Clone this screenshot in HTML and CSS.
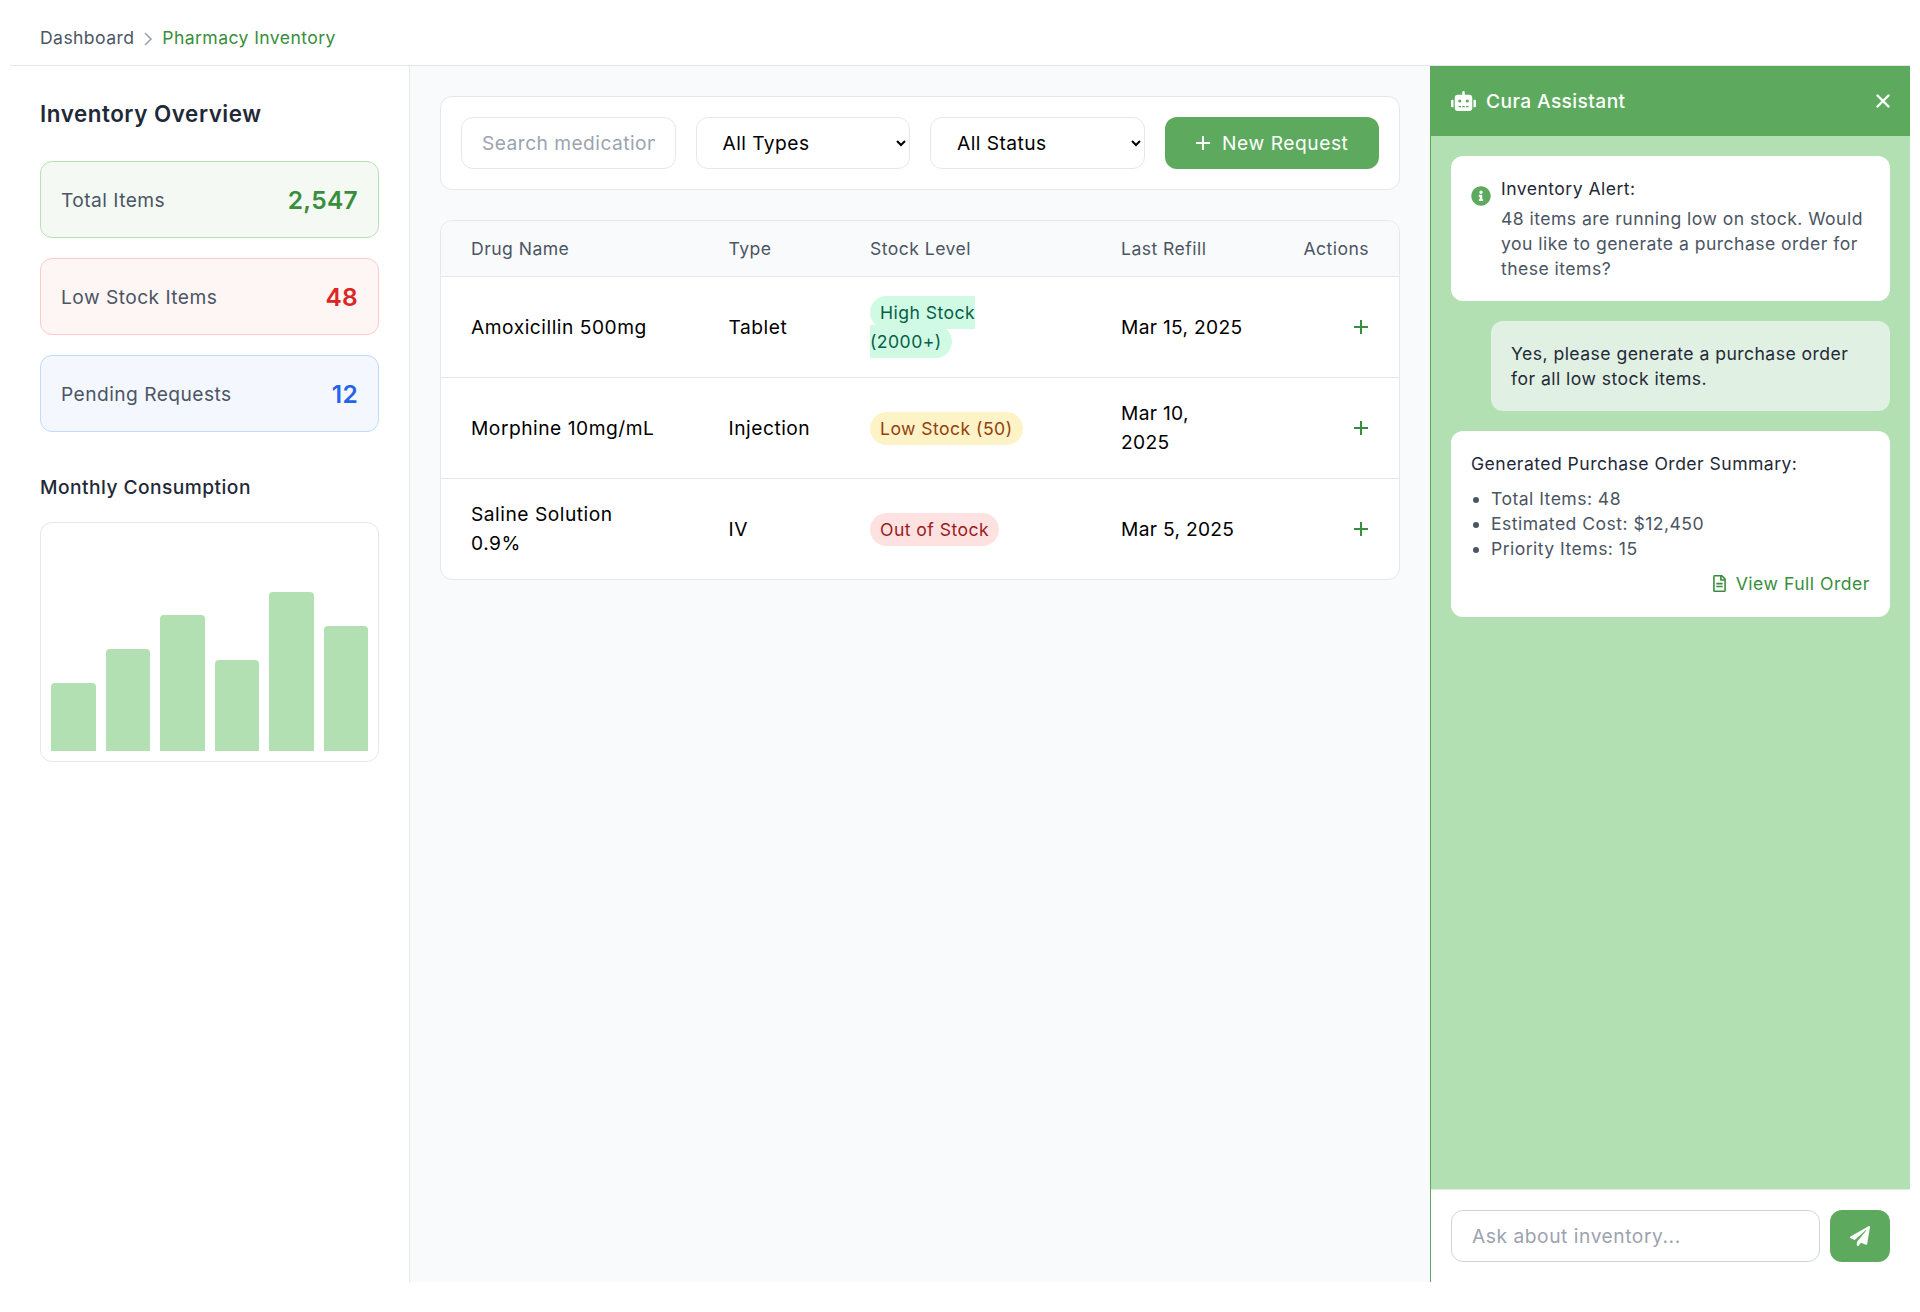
FILE: index.html
```html
<!DOCTYPE html>
<html lang="en">
<head>
  <meta charset="UTF-8" />
  <title>Pharmacy Inventory</title>
  <link rel="stylesheet" href="styles.css">
</head>
<body>
  <nav class="breadcrumb">
    <a href="#">Dashboard</a>
    <svg class="crumb-sep" viewBox="0 0 10 16"><path d="M2 2l6 6-6 6" /></svg>
    <span class="crumb-current">Pharmacy Inventory</span>
  </nav>

  <div class="layout">
    <aside class="sidebar">
      <h2>Inventory Overview</h2>
      <div class="stat-list">
        <div class="stat stat-green"><span>Total Items</span><strong>2,547</strong></div>
        <div class="stat stat-red"><span>Low Stock Items</span><strong>48</strong></div>
        <div class="stat stat-blue"><span>Pending Requests</span><strong>12</strong></div>
      </div>
      <h3>Monthly Consumption</h3>
      <div class="chart">
        <div class="bar" style="height: 30%"></div>
        <div class="bar" style="height: 45%"></div>
        <div class="bar" style="height: 60%"></div>
        <div class="bar" style="height: 40%"></div>
        <div class="bar" style="height: 70%"></div>
        <div class="bar" style="height: 55%"></div>
      </div>
    </aside>

    <main class="content">
      <div class="toolbar">
        <input type="text" placeholder="Search medications..." />
        <select><option>All Types</option></select>
        <select><option>All Status</option></select>
        <button class="btn-new">
          <svg class="icon-plus" viewBox="0 0 16 16"><path d="M8 1v14M1 8h14" /></svg>
          New Request
        </button>
      </div>

      <div class="table-wrap">
        <table>
          <thead>
            <tr>
              <th class="col-name">Drug Name</th>
              <th class="col-type">Type</th>
              <th class="col-stock">Stock Level</th>
              <th class="col-refill">Last Refill</th>
              <th class="col-actions">Actions</th>
            </tr>
          </thead>
          <tbody>
            <tr>
              <td>Amoxicillin 500mg</td>
              <td>Tablet</td>
              <td><span class="badge badge-high">High Stock<br>(2000+)</span></td>
              <td class="date">Mar 15, 2025</td>
              <td class="col-actions"><svg class="icon-plus" viewBox="0 0 16 16"><path d="M8 1v14M1 8h14" /></svg></td>
            </tr>
            <tr>
              <td>Morphine 10mg/mL</td>
              <td>Injection</td>
              <td><span class="badge badge-low">Low Stock (50)</span></td>
              <td class="date">Mar 10,<br>2025</td>
              <td class="col-actions"><svg class="icon-plus" viewBox="0 0 16 16"><path d="M8 1v14M1 8h14" /></svg></td>
            </tr>
            <tr>
              <td>Saline Solution<br>0.9%</td>
              <td>IV</td>
              <td><span class="badge badge-out">Out of Stock</span></td>
              <td class="date">Mar 5, 2025</td>
              <td class="col-actions"><svg class="icon-plus" viewBox="0 0 16 16"><path d="M8 1v14M1 8h14" /></svg></td>
            </tr>
          </tbody>
        </table>
      </div>
    </main>

    <section class="chat">
      <header class="chat-head">
        <div class="chat-title">
          <svg class="icon-robot" viewBox="0 0 640 512"><path d="M32,224H64V416H32A31.96166,31.96166,0,0,1,0,384V256A31.96166,31.96166,0,0,1,32,224Zm512-48V448a64.06328,64.06328,0,0,1-64,64H160a64.06328,64.06328,0,0,1-64-64V176a79.974,79.974,0,0,1,80-80H288V32a32,32,0,0,1,64,0V96H464A79.974,79.974,0,0,1,544,176ZM264,256a40,40,0,1,0-40,40A39.997,39.997,0,0,0,264,256Zm-8,128H192v32h64Zm96,0H288v32h64ZM456,256a40,40,0,1,0-40,40A39.997,39.997,0,0,0,456,256Zm-8,128H384v32h64ZM640,256V384a31.96166,31.96166,0,0,1-32,32H576V224h32A31.96166,31.96166,0,0,1,640,256Z" /></svg>
          <span>Cura Assistant</span>
        </div>
        <svg class="icon-close" viewBox="0 0 14 14"><path d="M1.5 1.5l11 11M12.5 1.5l-11 11" /></svg>
      </header>

      <div class="messages">
        <div class="msg msg-alert">
          <svg class="icon-info" viewBox="0 0 512 512"><path d="M256 8C119.043 8 8 119.083 8 256c0 136.997 111.043 248 248 248s248-111.003 248-248C504 119.083 392.957 8 256 8zm0 110c23.196 0 42 18.804 42 42s-18.804 42-42 42-42-18.804-42-42 18.804-42 42-42zm56 254c0 6.627-5.373 12-12 12h-88c-6.627 0-12-5.373-12-12v-24c0-6.627 5.373-12 12-12h12v-64h-12c-6.627 0-12-5.373-12-12v-24c0-6.627 5.373-12 12-12h64c6.627 0 12 5.373 12 12v100h12c6.627 0 12 5.373 12 12v24z" /></svg>
          <div>
            <p class="msg-title">Inventory Alert:</p>
            <p>48 items are running low on stock. Would you like to generate a purchase order for these items?</p>
          </div>
        </div>

        <div class="msg msg-user">
          <p>Yes, please generate a purchase order for all low stock items.</p>
        </div>

        <div class="msg">
          <p class="msg-title msg-title-spaced">Generated Purchase Order Summary:</p>
          <ul>
            <li>Total Items: 48</li>
            <li>Estimated Cost: $12,450</li>
            <li>Priority Items: 15</li>
          </ul>
          <a class="order-link" href="#">
            <svg class="icon-file" viewBox="0 0 384 512"><path d="M288 248v28c0 6.6-5.4 12-12 12H108c-6.6 0-12-5.4-12-12v-28c0-6.6 5.4-12 12-12h168c6.6 0 12 5.4 12 12zm-12 72H108c-6.6 0-12 5.4-12 12v28c0 6.6 5.4 12 12 12h168c6.6 0 12-5.4 12-12v-28c0-6.6-5.4-12-12-12zm108-188.1V464c0 26.5-21.5 48-48 48H48c-26.5 0-48-21.5-48-48V48C0 21.5 21.5 0 48 0h204.1C264.8 0 277 5.1 286 14.1L369.9 98c9 8.9 14.1 21.2 14.1 33.9zm-128-80V128h76.1L256 51.9zM336 464V176H232c-13.3 0-24-10.7-24-24V48H48v416h288z" /></svg>
            View Full Order
          </a>
        </div>
      </div>

      <div class="chat-input">
        <input type="text" placeholder="Ask about inventory..." />
        <button class="btn-send">
          <svg class="icon-send" viewBox="0 0 512 512"><path d="M476 3.2L12.5 270.6c-18.1 10.4-15.8 35.6 2.2 43.2L121 358.4l287.3-253.2c5.5-4.9 13.3 2.6 8.6 8.3L176 407v80.5c0 23.6 28.5 32.9 42.5 15.8L282 426l124.6 52.2c14.2 6 30.4-2.9 33-18.2l72-432C515 7.8 493.3-6.8 476 3.2z" /></svg>
        </button>
      </div>
    </section>
  </div>
</body>
</html>
```

FILE: styles.css
```css
* {
  box-sizing: border-box;
}

body {
  margin: 0;
  padding: 0 10px;
  background: #ffffff;
  color: #1f2937;
  font-family: Inter, "Noto Sans", sans-serif;
  font-size: 16px;
  line-height: 1.5;
  letter-spacing: 0.45px;
}

p, h2, h3, ul {
  margin: 0;
}

input, select, button {
  font-family: inherit;
  letter-spacing: inherit;
}

/* breadcrumb */
.breadcrumb {
  display: flex;
  align-items: center;
  gap: 9px;
  height: 66px;
  padding: 12px 30px 0;
  border-bottom: 1px solid #e5e7eb;
  font-size: 17.6px;
  letter-spacing: 0.4px;
}

.breadcrumb a {
  color: #4b5563;
  text-decoration: none;
}

.crumb-sep {
  width: 10px;
  height: 16px;
  fill: none;
  stroke: #9ca3af;
  stroke-width: 1.6;
}

.crumb-current {
  color: #388e3c;
}

.layout {
  display: flex;
  height: 1216px;
}

/* left column */
.sidebar {
  flex: 0 0 400px;
  padding: 31px 30px 30px;
  border-right: 1px solid #e5e7eb;
}

.sidebar h2 {
  margin-bottom: 30.7px;
  font-size: 22.4px;
  font-weight: 600;
  letter-spacing: 0.55px;
  color: #1f2937;
}

.stat-list {
  display: flex;
  flex-direction: column;
  gap: 20px;
  margin-bottom: 40px;
}

.stat {
  display: flex;
  justify-content: space-between;
  align-items: center;
  min-height: 77px;
  padding: 1px 20px 0;
  border: 1px solid;
  border-radius: 12px;
  font-size: 19.2px;
  color: #4b5563;
}

.stat strong {
  font-size: 24.5px;
  font-weight: 600;
  letter-spacing: 0.3px;
}

.stat-green {
  background: #f4f9f4;
  border-color: #b8e0b4;
}

.stat-green strong {
  color: #388e3c;
}

.stat-red {
  background: #fef5f5;
  border-color: #fecaca;
}

.stat-red strong {
  color: #dc2626;
}

.stat-blue {
  background: #f5f7ff;
  border-color: #bfdbfe;
}

.stat-blue strong {
  color: #2563eb;
}

.sidebar h3 {
  margin-bottom: 20px;
  font-size: 19.2px;
  line-height: 30px;
  font-weight: 500;
  color: #1f2937;
}

.chart {
  display: flex;
  align-items: flex-end;
  gap: 10px;
  height: 240px;
  padding: 0 10px 10px;
  border: 1px solid #e5e7eb;
  border-radius: 12px;
}

.bar {
  flex: 1;
  background: #b2e0b2;
  border-radius: 4px 4px 0 0;
}

/* middle column */
.content {
  flex: 1;
  min-width: 0;
  padding: 30px;
  background: #f9fafb;
}

.toolbar {
  display: grid;
  grid-template-columns: repeat(4, 1fr);
  gap: 20px;
  margin-bottom: 30px;
  padding: 20px;
  background: #ffffff;
  border: 1px solid #e5e7eb;
  border-radius: 12px;
}

.toolbar input, .toolbar select, .btn-new {
  min-width: 0;
  width: 100%;
  height: 52px;
  border-radius: 12px;
  font-size: 19.2px;
}

.toolbar input, .toolbar select {
  padding: 0 20px;
  background: #ffffff;
  border: 1px solid #e5e7eb;
  color: #000000;
}

.toolbar select {
  padding: 0 22px;
}

input::placeholder {
  color: #9ca3af;
}

.btn-new {
  display: flex;
  justify-content: center;
  align-items: center;
  gap: 11px;
  background: #5daa5e;
  border: none;
  color: #ffffff;
  letter-spacing: 0.55px;
}

.btn-new .icon-plus {
  width: 16px;
  height: 16px;
  stroke: #ffffff;
}

.icon-plus {
  width: 16px;
  height: 16px;
  fill: none;
  stroke: #388e3c;
  stroke-width: 2;
}

.table-wrap {
  background: #ffffff;
  border: 1px solid #e5e7eb;
  border-radius: 12px;
  overflow: hidden;
}

table {
  width: 100%;
  border-collapse: collapse;
  table-layout: fixed;
  font-size: 19.2px;
  line-height: 29px;
  color: #000000;
}

th {
  height: 55px;
  padding: 1px 30px 0;
  background: #f9fafb;
  border-bottom: 1px solid #e5e7eb;
  font-size: 17.6px;
  font-weight: 400;
  text-align: left;
  color: #4b5563;
}

td {
  height: 101px;
  padding: 1px 30px 0;
  border-bottom: 1px solid #e5e7eb;
  letter-spacing: 0.52px;
}

tbody tr:last-child td {
  border-bottom: none;
}

.col-name {
  width: 257.5px;
}

.col-type {
  width: 141.5px;
}

.col-stock {
  width: 251px;
}

.col-refill {
  width: 182px;
}

td.date {
  white-space: nowrap;
  letter-spacing: 0.3px;
}

th.col-actions, td.col-actions {
  text-align: right;
}

.col-actions .icon-plus {
  vertical-align: -1px;
}

.badge {
  padding: 6px 10px;
  border-radius: 20px;
  font-size: 17.6px;
  letter-spacing: 0.45px;
}

.badge-high {
  background: #d1fae5;
  color: #065f46;
}

.badge-low {
  background: #fef3c7;
  color: #92400e;
}

.badge-out {
  background: #fee2e2;
  color: #991b1b;
}

/* assistant panel */
.chat {
  display: flex;
  flex-direction: column;
  flex: 0 0 480px;
  background: #ffffff;
  border-left: 1px solid #5daa5e;
}

.chat-head {
  display: flex;
  justify-content: space-between;
  align-items: center;
  height: 70px;
  margin-left: -1px;
  padding: 0 20px 0 21px;
  background: #5daa5e;
  color: #ffffff;
}

.chat-title {
  display: flex;
  align-items: center;
  gap: 10px;
  font-size: 19.2px;
  font-weight: 500;
  letter-spacing: 0.4px;
}

.icon-robot {
  width: 25px;
  height: 20px;
  fill: #ffffff;
}

.icon-close {
  width: 14px;
  height: 14px;
  fill: none;
  stroke: #ffffff;
  stroke-width: 2.4;
  stroke-linecap: round;
}

.messages {
  flex: 1;
  display: flex;
  flex-direction: column;
  gap: 20px;
  padding: 20px;
  background: #b2e0b2;
}

.msg {
  padding: 20px;
  background: #ffffff;
  border-radius: 12px;
  font-size: 17.6px;
  line-height: 25px;
  color: #4b5563;
}

.msg-alert {
  display: flex;
  align-items: flex-start;
  gap: 10px;
}

.icon-info {
  flex: none;
  width: 20px;
  height: 20px;
  margin-top: 10px;
  fill: #5daa5e;
}

.msg-title {
  margin-bottom: 5px;
  font-weight: 400;
  color: #1f2937;
}

.msg-title-spaced {
  margin-bottom: 10px;
}

.msg-user {
  margin-left: 40px;
  background: #e0f0e2;
  color: #1f2937;
}

.msg ul {
  padding-left: 20px;
}

.order-link {
  display: flex;
  justify-content: flex-end;
  align-items: center;
  gap: 10px;
  margin: 10px 0 1px;
  color: #388e3c;
  text-decoration: none;
  letter-spacing: 0.5px;
}

.icon-file {
  width: 13px;
  height: 17px;
  fill: #388e3c;
}

.chat-input {
  display: flex;
  gap: 10px;
  padding: 20px;
  background: #ffffff;
  border-top: 1px solid #e5e7eb;
}

.chat-input input {
  flex: 1;
  min-width: 0;
  height: 52px;
  padding: 0 20px;
  border: 1px solid #d1d5db;
  border-radius: 12px;
  font-size: 19.2px;
  letter-spacing: 0.55px;
}

.btn-send {
  flex: 0 0 60px;
  display: flex;
  justify-content: center;
  align-items: center;
  height: 52px;
  background: #5daa5e;
  border: none;
  border-radius: 12px;
}

.icon-send {
  width: 20px;
  height: 20px;
  fill: #ffffff;
}
```
